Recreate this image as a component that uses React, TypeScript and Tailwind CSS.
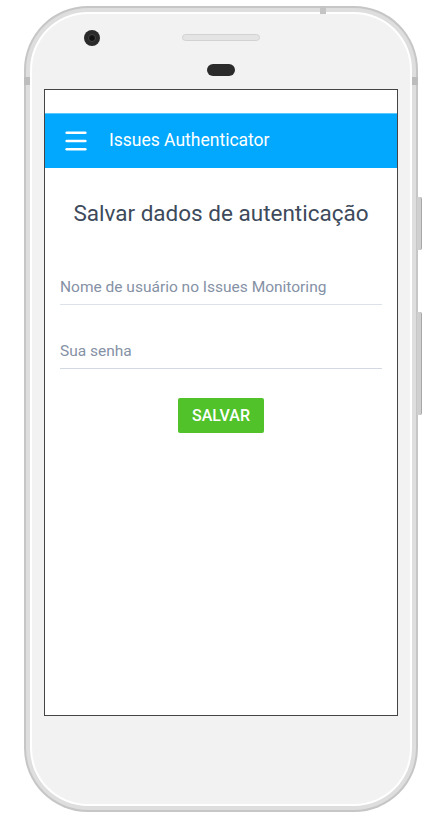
import { Menu } from 'lucide-react';

function PhoneTop() {
  return (
    <div className="relative h-[75px]">
      {/* camera */}
      <div className="absolute left-[40px] top-[16px] w-[16px] h-[16px] rounded-full bg-[#2a2a2a] flex items-center justify-center">
        <div className="w-[8px] h-[8px] rounded-full bg-[#111] border border-[#444]" />
      </div>
      {/* speaker grille */}
      <div className="absolute left-[138px] top-[20px] w-[78px] h-[7px] rounded-full bg-[#e4e4e4] border border-[#d2d2d2]" />
      {/* earpiece */}
      <div className="absolute left-[163px] top-[50px] w-[28px] h-[12px] rounded-full bg-[#2b2b2b]" />
    </div>
  );
}

export default function App() {
  return (
    <div className="w-[444px] h-[818px] bg-white pt-[6px] pl-[24px] font-['Roboto',sans-serif]">
      <div className="relative w-[394px] h-[806px]">
        {/* side buttons */}
        <div className="absolute right-[-4px] top-[191px] w-[5px] h-[53px] rounded-r-[2px] bg-[#cfcfcf] border-r border-[#a8a8a8]" />
        <div className="absolute right-[-4px] top-[306px] w-[5px] h-[103px] rounded-r-[2px] bg-[#cfcfcf] border-r border-[#a8a8a8]" />

        <div className="w-full h-full rounded-[64px] bg-[#c6c6c6] p-[2px]">
          <div className="w-full h-full rounded-[62px] bg-[#dedede] p-[4px]">
            <div className="relative w-full h-full rounded-[58px] bg-white p-[2px]">
              {/* antenna notches */}
              <div className="absolute left-[290px] top-[-6px] w-[6px] h-[8px] bg-[#c4c4c4]" />
              <div className="absolute left-[-6px] top-[65px] w-[6px] h-[8px] bg-[#bdbdbd]" />
              <div className="absolute right-[-6px] top-[65px] w-[6px] h-[8px] bg-[#bdbdbd]" />

              <div className="w-full h-full rounded-[56px] bg-[#f2f2f2] pl-[12px]">
                <PhoneTop />

                {/* screen */}
                <div className="w-[354px] h-[627px] border border-[#444] bg-white flex flex-col">
                  <div className="h-[23px]" />
                  <div className="h-[55px] bg-[#02a8fd] border-t border-[#5ccaff] flex items-center">
                    <Menu size={28} strokeWidth={2.2} className="text-white ml-[17px]" />
                    <span className="ml-[19px] text-white text-[17.5px] leading-none">Issues Authenticator</span>
                  </div>

                  <div className="flex flex-col px-[15px]">
                    <h1 className="mt-[32px] text-center text-[22.5px] leading-[27px] text-[#3d4a5b] font-normal">
                      Salvar dados de autenticação
                    </h1>

                    <input
                      className="mt-[42px] h-[36px] w-full border-b border-[#dde2ea] text-[15.5px] text-[#3d4a5b] placeholder:text-[#8591a5] outline-none bg-transparent"
                      placeholder="Nome de usuário no Issues Monitoring"
                    />
                    <input
                      type="password"
                      className="mt-[28px] h-[36px] w-full border-b border-[#d3d9e3] text-[15.5px] text-[#3d4a5b] placeholder:text-[#8591a5] outline-none bg-transparent"
                      placeholder="Sua senha"
                    />

                    <div className="flex justify-center mt-[29px]">
                      <button className="w-[86px] h-[35px] rounded-[2px] bg-[#51c22a] text-white text-[16px] font-medium">
                        SALVAR
                      </button>
                    </div>
                  </div>
                </div>
              </div>
            </div>
          </div>
        </div>
      </div>
    </div>
  );
}
